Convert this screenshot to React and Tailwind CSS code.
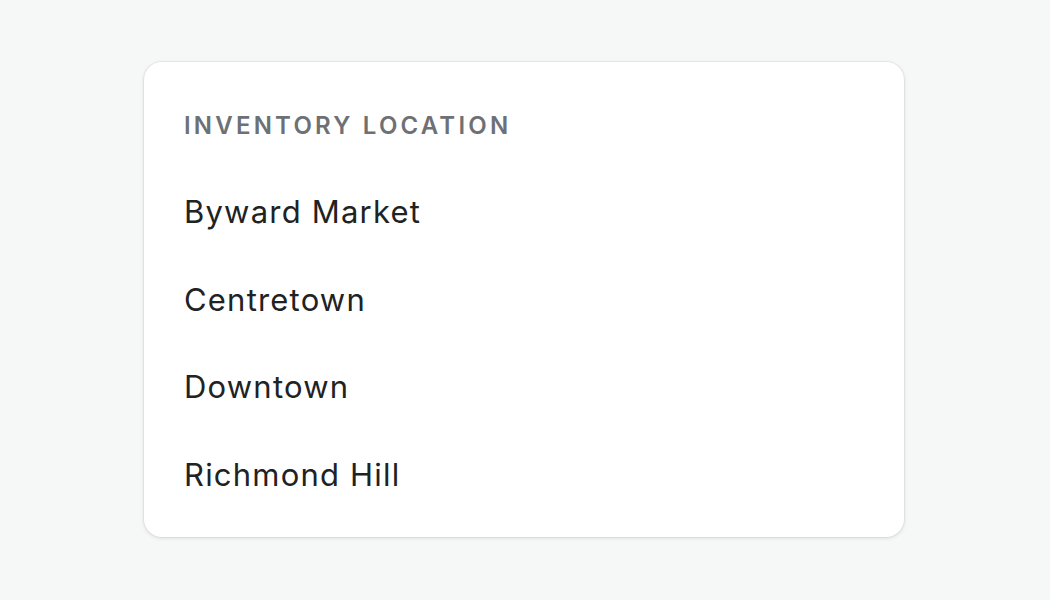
export default function App() {
  const items = ["Byward Market", "Centretown", "Downtown", "Richmond Hill"];
  return (
    <div className="w-[1050px] h-[600px] bg-[#f6f7f7] pt-[62px] pl-[144px]" style={{ fontFamily: "Inter, 'Noto Sans', sans-serif" }}>
      <div className="w-[760px] h-[475px] bg-white rounded-[18px] shadow-[0_1px_4px_rgba(0,0,0,0.12),0_0_0_1px_rgba(0,0,0,0.04)] px-10 pt-[47px] pb-[18px]">
        <div className="text-[24px] leading-[33px] font-semibold tracking-[3.2px] text-[#6d7175]">INVENTORY LOCATION</div>
        <div className="mt-[26px] flex flex-col">
          {items.map((t) => (
            <div key={t} className="text-[31px] leading-[87.5px] tracking-[1.2px] text-[#202223]">{t}</div>
          ))}
        </div>
      </div>
    </div>
  );
}
